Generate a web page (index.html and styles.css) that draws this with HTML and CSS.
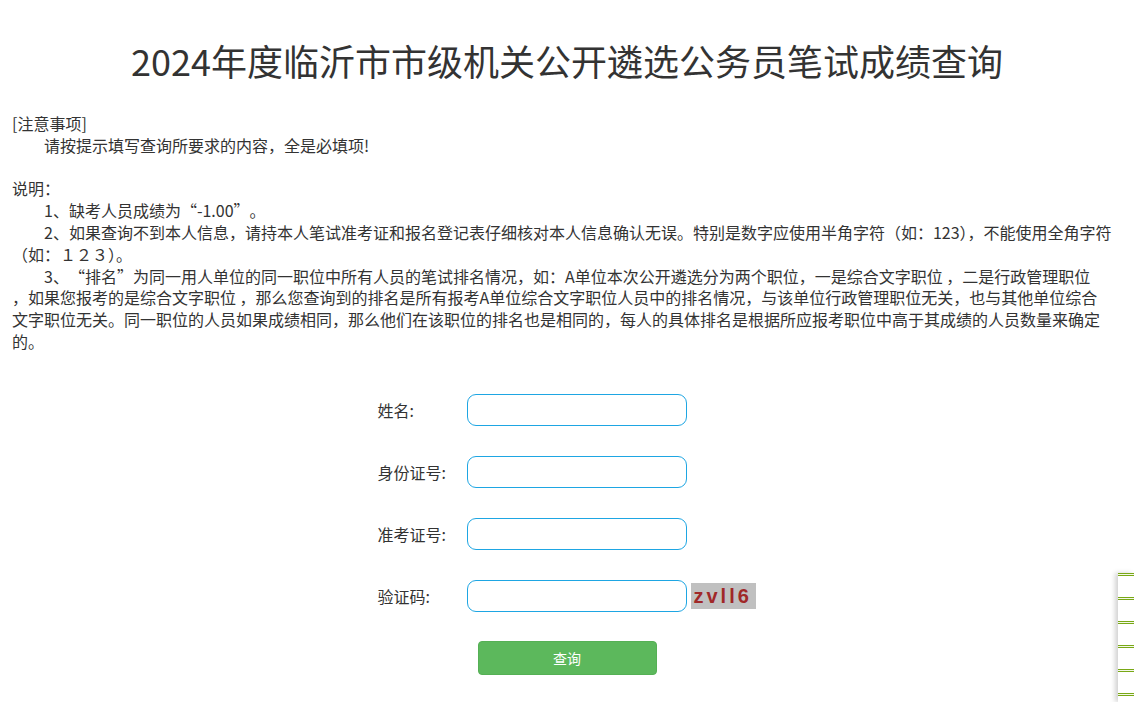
FILE: index.html
```html
<!DOCTYPE html>
<html lang="zh-CN">
<head>
<meta charset="utf-8">
<title>2024年度临沂市市级机关公开遴选公务员笔试成绩查询</title>
<link rel="stylesheet" href="styles.css">
</head>
<body>
<h1 class="title">2024年度临沂市市级机关公开遴选公务员笔试成绩查询</h1>
<div class="notice">
  <p>[注意事项]</p>
  <p class="ind">请按提示填写查询所要求的内容，全是必填项!</p>
  <p class="blank">&nbsp;</p>
  <p>说明：</p>
  <p class="ind">1、缺考人员成绩为<span class="qo">“</span>-1.00<span class="qc">”</span>。</p>
  <p class="ind">2、如果查询不到本人信息，请持本人笔试准考证和报名登记表仔细核对本人信息确认无误。特别是数字应使用半角字符（如：123），不能使用全角字符（如：１２３）。</p>
  <p class="ind">3、<span class="qo">“</span>排名<span class="qc">”</span>为同一用人单位的同一职位中所有人员的笔试排名情况，如：A单位本次公开遴选分为两个职位，一是综合文字职位 ，二是行政管理职位<br>，如果您报考的是综合文字职位 ，那么您查询到的排名是所有报考A单位综合文字职位人员中的排名情况，与该单位行政管理职位无关，也与其他单位综合<br>文字职位无关。同一职位的人员如果成绩相同，那么他们在该职位的排名也是相同的，每人的具体排名是根据所应报考职位中高于其成绩的人员数量来确定<br>的。</p>
</div>
<form class="query" onsubmit="return false">
  <div class="row">
    <label class="lbl" for="xm">姓名:</label>
    <input class="field" id="xm" type="text">
  </div>
  <div class="row">
    <label class="lbl" for="sfz">身份证号:</label>
    <input class="field" id="sfz" type="text">
  </div>
  <div class="row">
    <label class="lbl" for="zkz">准考证号:</label>
    <input class="field" id="zkz" type="text">
  </div>
  <div class="row">
    <label class="lbl" for="yzm">验证码:</label>
    <input class="field" id="yzm" type="text">
    <span class="captcha">zvll6</span>
  </div>
  <div class="btnrow">
    <button class="btn" type="submit">查询</button>
  </div>
</form>
<div class="sidebar">
  <div class="bar"></div>
  <div class="bar"></div>
  <div class="bar"></div>
  <div class="bar"></div>
  <div class="bar"></div>
  <div class="bar"></div>
</div>
</body>
</html>
```
FILE: styles.css
```css
html, body {
  margin: 0;
  padding: 0;
  background: #fff;
}
body {
  font-family: "Noto Sans CJK SC", "Noto Sans", sans-serif;
  color: #333;
  width: 1134px;
  height: 702px;
  overflow: hidden;
}
.title {
  font-size: 36px;
  font-weight: normal;
  line-height: 44px;
  margin: 38px 0 31px;
  text-align: center;
  color: #333;
}
.notice {
  padding: 0 8px 0 12px;
  font-size: 16px;
  line-height: 21.8px;
}
.notice p {
  margin: 0;
}
.notice .ind {
  text-indent: 2em;
}
.notice .qo,
.notice .qc {
  display: inline-block;
  width: 1em;
  text-indent: 0;
}
.notice .qo {
  text-align: right;
}
.notice .qc {
  text-align: left;
}
.query {
  width: 379px;
  margin: 41px auto 0;
  display: flex;
  flex-direction: column;
  gap: 30px;
}
.row {
  display: flex;
  align-items: center;
  height: 32px;
}
.lbl {
  width: 89px;
  font-size: 16px;
  color: #333;
}
.field {
  box-sizing: border-box;
  width: 220px;
  height: 32px;
  border: 1px solid #1ea6e3;
  border-radius: 9px;
  outline: none;
  padding: 0 8px;
  font-size: 14px;
  background: #fff;
}
.captcha {
  margin-left: 4px;
  width: 65px;
  height: 26px;
  box-sizing: border-box;
  padding-left: 3px;
  background: #c0c0c0;
  color: #a02828;
  font-family: "Liberation Sans", Arial, sans-serif;
  font-weight: bold;
  font-size: 20px;
  line-height: 26px;
  letter-spacing: 3px;
}
.btnrow {
  display: flex;
  justify-content: center;
  margin-top: -1px;
}
.btn {
  width: 179px;
  height: 34px;
  background: #5cb85c;
  border: 1px solid #55b055;
  border-radius: 4px;
  color: #fff;
  font-family: "Noto Sans CJK SC", sans-serif;
  font-size: 14px;
  cursor: pointer;
}
.sidebar {
  position: fixed;
  left: 1118px;
  top: 573px;
  width: 16px;
  height: 129px;
  background: #fff;
  box-shadow: -3px 0 5px rgba(0, 0, 0, 0.18);
  display: flex;
  flex-direction: column;
  gap: 21px;
}
.bar {
  flex: none;
  height: 3px;
  background: linear-gradient(#79a816 0 1px, #f4f8ea 1px 2px, #79a816 2px 3px);
}
```
